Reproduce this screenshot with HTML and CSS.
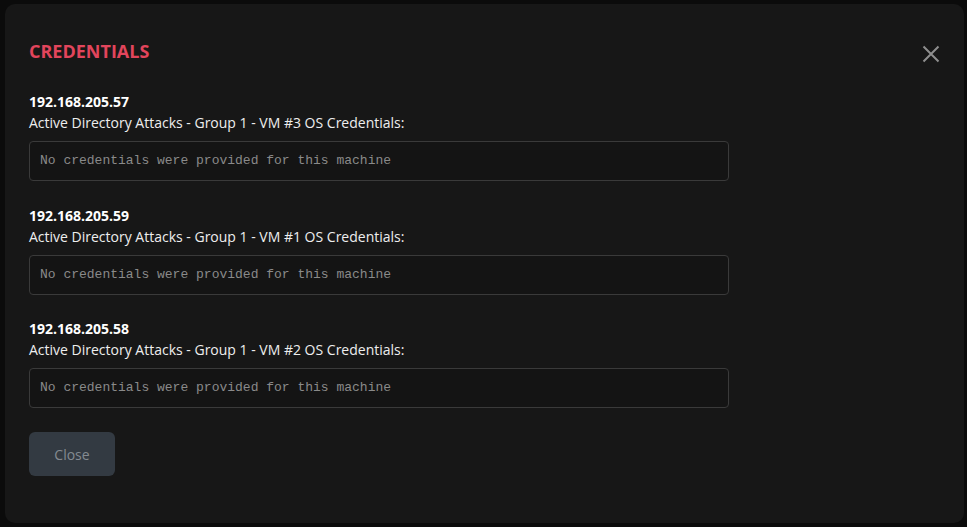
FILE: index.html
```html
<!DOCTYPE html>
<html lang="en">
<head>
<meta charset="utf-8">
<title>Credentials</title>
<link rel="stylesheet" href="styles.css">
</head>
<body>
<div class="modal">
  <div class="modal-header">
    <h2 class="modal-title">CREDENTIALS</h2>
    <button class="icon-close" aria-label="Close">
      <svg width="18" height="18" viewBox="0 0 18 18"><path d="M1.5 1.5 L16.5 16.5 M16.5 1.5 L1.5 16.5" stroke="#8e8e8e" stroke-width="2" fill="none"/></svg>
    </button>
  </div>
  <div class="cred-list">
    <div class="cred">
      <div class="cred-ip">192.168.205.57</div>
      <div class="cred-label">Active Directory Attacks - Group 1 - VM #3 OS Credentials:</div>
      <div class="cred-box">No credentials were provided for this machine</div>
    </div>
    <div class="cred">
      <div class="cred-ip">192.168.205.59</div>
      <div class="cred-label">Active Directory Attacks - Group 1 - VM #1 OS Credentials:</div>
      <div class="cred-box">No credentials were provided for this machine</div>
    </div>
    <div class="cred">
      <div class="cred-ip">192.168.205.58</div>
      <div class="cred-label">Active Directory Attacks - Group 1 - VM #2 OS Credentials:</div>
      <div class="cred-box">No credentials were provided for this machine</div>
    </div>
  </div>
  <button class="btn-close">Close</button>
</div>
</body>
</html>
```

FILE: styles.css
```css
html, body {
  margin: 0;
  height: 100%;
  background: #0b0b0b;
}
body {
  padding: 4px 3px 4px 5px;
  box-sizing: border-box;
  font-family: "Open Sans", "Noto Sans", sans-serif;
}
.modal {
  background: #171717;
  border-radius: 10px;
  height: 519px;
  box-sizing: border-box;
  padding: 35px 24px 0 24px;
  display: flex;
  flex-direction: column;
  align-items: flex-start;
}
.modal-header {
  width: 100%;
  display: flex;
  justify-content: space-between;
  align-items: center;
}
.modal-title {
  margin: 0;
  font-size: 18px;
  line-height: 24px;
  font-weight: 700;
  color: #e2455c;
}
.icon-close {
  background: none;
  border: 0;
  padding: 0;
  margin-right: 0;
  margin-top: 6px;
  width: 18px;
  height: 18px;
  display: flex;
  cursor: pointer;
}
.cred-list {
  margin-top: 28px;
  display: flex;
  flex-direction: column;
  gap: 23.5px;
}
.cred-ip {
  font-size: 14px;
  line-height: 21px;
  font-weight: 700;
  color: #ffffff;
}
.cred-label {
  font-size: 14px;
  line-height: 21px;
  color: #eeeeee;
}
.cred-box {
  margin-top: 8px;
  width: 700px;
  height: 40px;
  box-sizing: border-box;
  border: 1px solid #3a3a3a;
  border-radius: 4px;
  background: #141414;
  padding: 0 10px 1px 10px;
  display: flex;
  align-items: center;
  font-family: "Liberation Mono", "DejaVu Sans Mono", monospace;
  font-size: 13px;
  color: #8a8a8a;
}
.btn-close {
  margin-top: 24px;
  width: 86px;
  height: 44px;
  border: 0;
  border-radius: 6px;
  background: #333a42;
  color: #848a91;
  font-family: "Open Sans", "Noto Sans", sans-serif;
  font-size: 14px;
  cursor: pointer;
}
```
